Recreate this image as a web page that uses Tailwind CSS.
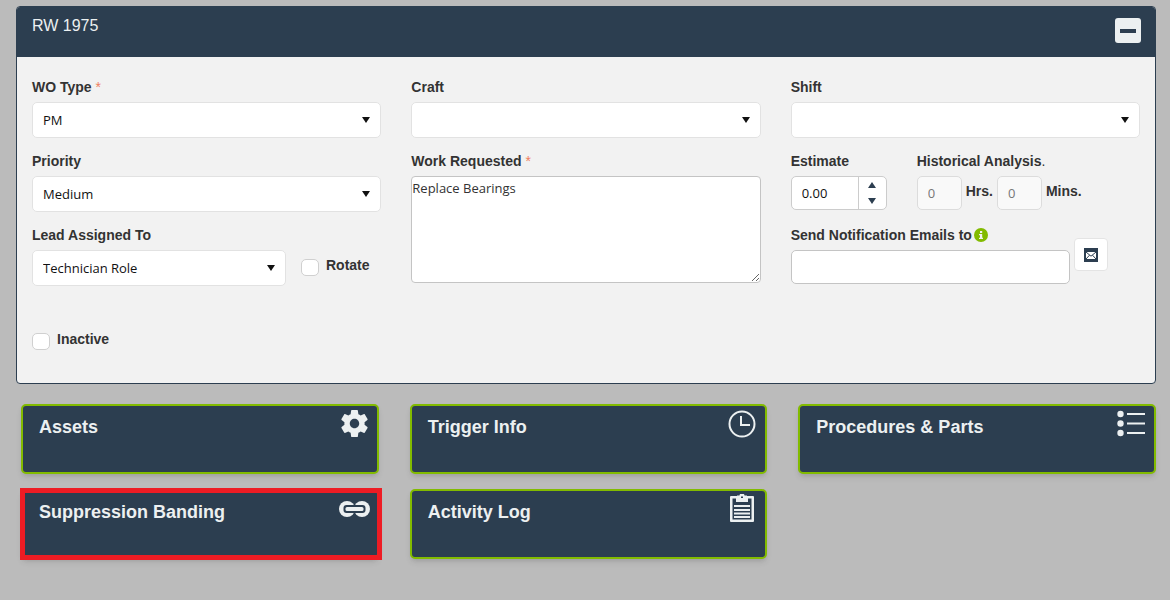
<!DOCTYPE html>
<html lang="en">
<head>
    <meta charset="UTF-8">
    <meta name="viewport" content="width=device-width, initial-scale=1.0">
    <title>RW 1975</title>
    <script src="https://cdn.jsdelivr.net/npm/@tailwindcss/browser@4"></script>
</head>
<body class="min-h-screen bg-[#bbbbbb] font-['Liberation_Sans',Arial,sans-serif] text-sm text-[#333]">
    <main class="pt-1.5 pr-3.5 pb-10 pl-4">
        <!-- Work order panel -->
        <section class="overflow-hidden rounded-[4px] border border-[#2c3e50] bg-[#f2f2f2]">
            <header class="flex h-[50px] items-start justify-between bg-[#2c3e50] pt-2 pr-3.5 pl-[15px]">
                <h1 class="text-base leading-[22px] text-[#ecf0f1]">RW 1975</h1>
                <button type="button" aria-label="Collapse" class="mt-[3px] flex h-[25px] w-[26px] items-center justify-center rounded-[3px] bg-[#ecf0f1]">
                    <svg width="16" height="4" viewBox="0 0 16 4" fill="#2c3e50"><rect width="16" height="4" /></svg>
                </button>
            </header>

            <form class="grid grid-cols-3 gap-x-[30px] px-[15px] pt-5 pb-[33px]">
                <!-- Left column -->
                <div class="flex flex-col gap-[13px]">
                    <div class="flex flex-col gap-[5px]">
                        <label for="woType" class="leading-5 font-bold">WO Type <span class="font-normal text-[#f08060]">*</span></label>
                        <div class="relative">
                            <select id="woType" class="h-9 w-full appearance-none rounded-[5px] border border-[#e2e2e2] bg-white px-2.5 font-['Open_Sans',sans-serif] text-[13px] text-[#111]">
                                <option>PM</option>
                            </select>
                            <svg class="pointer-events-none absolute top-[15px] right-[11px]" width="8" height="6" viewBox="0 0 8 6" fill="#111"><path d="M0 0h8L4 6z" /></svg>
                        </div>
                    </div>
                    <div class="flex flex-col gap-[5px]">
                        <label for="priority" class="leading-5 font-bold">Priority</label>
                        <div class="relative">
                            <select id="priority" class="h-9 w-full appearance-none rounded-[5px] border border-[#e2e2e2] bg-white px-2.5 font-['Open_Sans',sans-serif] text-[13px] text-[#111]">
                                <option>Medium</option>
                            </select>
                            <svg class="pointer-events-none absolute top-[15px] right-[11px]" width="8" height="6" viewBox="0 0 8 6" fill="#111"><path d="M0 0h8L4 6z" /></svg>
                        </div>
                    </div>
                    <div class="flex gap-[15px]">
                        <div class="flex w-[254px] flex-col gap-[5px]">
                            <label for="lead" class="leading-5 font-bold">Lead Assigned To</label>
                            <div class="relative">
                                <select id="lead" class="h-9 w-full appearance-none rounded-[5px] border border-[#e2e2e2] bg-white px-2.5 font-['Open_Sans',sans-serif] text-[13px] text-[#111]">
                                    <option>Technician Role</option>
                                </select>
                                <svg class="pointer-events-none absolute top-[15px] right-[11px]" width="8" height="6" viewBox="0 0 8 6" fill="#111"><path d="M0 0h8L4 6z" /></svg>
                            </div>
                        </div>
                        <div class="flex items-start gap-[7px] pt-[30px]">
                            <input type="checkbox" id="rotate" class="mt-1 h-[17px] w-[18px] appearance-none rounded-[5px] border border-[#d0d0d0] bg-white">
                            <label for="rotate" class="leading-5 font-bold">Rotate</label>
                        </div>
                    </div>
                    <div class="flex items-start gap-[7px] pt-[30px]">
                        <input type="checkbox" id="inactive" class="mt-1 h-[17px] w-[18px] appearance-none rounded-[5px] border border-[#d0d0d0] bg-white">
                        <label for="inactive" class="leading-5 font-bold">Inactive</label>
                    </div>
                </div>

                <!-- Middle column -->
                <div class="flex flex-col gap-[13px]">
                    <div class="flex flex-col gap-[5px]">
                        <label for="craft" class="leading-5 font-bold">Craft</label>
                        <div class="relative">
                            <select id="craft" class="h-9 w-full appearance-none rounded-[5px] border border-[#e2e2e2] bg-white px-2.5 font-['Open_Sans',sans-serif] text-[13px] text-[#111]">
                                <option></option>
                            </select>
                            <svg class="pointer-events-none absolute top-[15px] right-[11px]" width="8" height="6" viewBox="0 0 8 6" fill="#111"><path d="M0 0h8L4 6z" /></svg>
                        </div>
                    </div>
                    <div class="flex flex-col gap-[5px]">
                        <label for="workRequested" class="leading-5 font-bold">Work Requested <span class="font-normal text-[#f08060]">*</span></label>
                        <textarea id="workRequested" class="h-[107px] w-full resize rounded-[4px] border border-[#c4c4c4] bg-white py-0.5 font-['Open_Sans',sans-serif] text-[13px] leading-[18px] text-[#333]">Replace Bearings</textarea>
                    </div>
                </div>

                <!-- Right column -->
                <div class="flex flex-col gap-[13px]">
                    <div class="flex flex-col gap-[5px]">
                        <label for="shift" class="leading-5 font-bold">Shift</label>
                        <div class="relative">
                            <select id="shift" class="h-9 w-full appearance-none rounded-[5px] border border-[#e2e2e2] bg-white px-2.5 font-['Open_Sans',sans-serif] text-[13px] text-[#111]">
                                <option></option>
                            </select>
                            <svg class="pointer-events-none absolute top-[15px] right-[11px]" width="8" height="6" viewBox="0 0 8 6" fill="#111"><path d="M0 0h8L4 6z" /></svg>
                        </div>
                    </div>
                    <div class="flex h-[61px] gap-[30px]">
                        <div class="flex w-24 flex-col gap-[5px]">
                            <label for="estimate" class="leading-5 font-bold">Estimate</label>
                            <div class="flex h-[34px] overflow-hidden rounded-[5px] border border-[#ccc] bg-white">
                                <input type="text" inputmode="decimal" id="estimate" value="0.00" class="w-0 flex-1 pl-2.5 font-['Open_Sans',sans-serif] text-[13px] text-[#111]">
                                <div class="flex w-7 flex-col border-l border-[#ccc]">
                                    <button type="button" aria-label="Increase" class="flex flex-1 items-center justify-center">
                                        <svg width="8" height="6" viewBox="0 0 8 6" fill="#2c3e50"><path d="M0 6h8L4 0z" /></svg>
                                    </button>
                                    <button type="button" aria-label="Decrease" class="flex flex-1 items-center justify-center">
                                        <svg width="8" height="6" viewBox="0 0 8 6" fill="#2c3e50"><path d="M0 0h8L4 6z" /></svg>
                                    </button>
                                </div>
                            </div>
                        </div>
                        <div class="flex flex-col gap-[5px]">
                            <div class="leading-5"><b>Historical Analysis</b>.</div>
                            <div class="flex gap-1">
                                <input type="text" id="histHours" value="0" disabled class="h-[34px] w-[45px] rounded-[5px] border border-[#dcdcdc] bg-[#f9f9f9] px-2.5 font-['Open_Sans',sans-serif] text-[13px] text-[#777]">
                                <label for="histHours" class="mt-[5px] leading-5 font-bold">Hrs.</label>
                                <input type="text" id="histMins" value="0" disabled class="h-[34px] w-[45px] rounded-[5px] border border-[#dcdcdc] bg-[#f9f9f9] px-2.5 font-['Open_Sans',sans-serif] text-[13px] text-[#777]">
                                <label for="histMins" class="mt-[5px] leading-5 font-bold">Mins.</label>
                            </div>
                        </div>
                    </div>
                    <div class="flex items-start gap-1">
                        <div class="flex w-[279px] flex-col gap-[5px]">
                            <div class="flex items-center gap-0.5">
                                <label for="emails" class="leading-5 font-bold">Send Notification Emails to</label>
                                <svg width="14" height="14" viewBox="0 0 14 14"><circle cx="7" cy="7" r="7" fill="#82bb00" /><path fill="#f2f2f2" d="M6 3h2.200v2H6zM5 6h3.200v3.800H9V11H5V9.800h1V7.200H5z" /></svg>
                            </div>
                            <input type="text" id="emails" class="h-[34px] w-full rounded-[5px] border border-[#c4c4c4] bg-white px-2.5 font-['Open_Sans',sans-serif] text-[13px]">
                        </div>
                        <button type="button" aria-label="Send email" class="mt-[13px] flex h-[33px] w-[34px] items-center justify-center rounded-[4px] border border-[#e4e4e4] bg-white">
                            <svg width="14" height="14" viewBox="0 0 14 14"><rect width="14" height="14" fill="#2c3e50" /><rect x="2" y="4" width="10" height="7" fill="#fff" /><path d="M2 4l5 4.200L12 4M2 11l3.500-3.800M12 11L8.500 7.200" fill="none" stroke="#2c3e50" /></svg>
                        </button>
                    </div>
                </div>
            </form>
        </section>

        <!-- Section tiles -->
        <nav class="mt-5 grid grid-cols-3 gap-x-[31px] gap-y-[15px] pl-[5px]">
            <button type="button" class="flex h-[70px] items-start justify-between rounded-[5px] border-2 border-[#82bb00] bg-[#2c3e50] pt-1 pr-[9px] pl-4 text-left text-lg font-bold text-[#ecf0f1] shadow-md">
                <span class="mt-[3px] leading-7">Assets</span>
                <svg width="27" height="27" viewBox="2.300 2 19.400 20" fill="currentColor"><path d="M19.430 12.980c.04-.32.070-.64.070-.98s-.03-.66-.07-.98l2.110-1.650c.19-.15.240-.42.120-.64l-2-3.460c-.12-.22-.39-.3-.61-.22l-2.490 1c-.52-.4-1.080-.73-1.690-.98l-.38-2.650C14.460 2.180 14.250 2 14 2h-4c-.25 0-.46.180-.49.420l-.38 2.650c-.61.250-1.170.590-1.690.980l-2.490-1c-.23-.09-.49 0-.61.220l-2 3.460c-.13.220-.07.490.12.640l2.110 1.650c-.04.320-.07.650-.07.980s.03.660.070.980l-2.110 1.650c-.19.150-.24.420-.12.640l2 3.460c.12.220.390.300.610.220l2.490-1c.52.400 1.080.730 1.690.980l.38 2.650c.03.240.240.420.490.420h4c.25 0 .46-.18.490-.42l.38-2.650c.61-.25 1.170-.59 1.690-.98l2.490 1c.23.090.490 0 .61-.22l2-3.460c.12-.22.070-.49-.12-.64l-2.110-1.650zM12 15.500c-1.930 0-3.500-1.570-3.500-3.500s1.570-3.500 3.500-3.500 3.500 1.570 3.500 3.500-1.570 3.500-3.500 3.500z" /></svg>
            </button>
            <button type="button" class="flex h-[70px] items-start justify-between rounded-[5px] border-2 border-[#82bb00] bg-[#2c3e50] pt-1 pr-[9px] pl-4 text-left text-lg font-bold text-[#ecf0f1] shadow-md">
                <span class="mt-[3px] leading-7">Trigger Info</span>
                <svg width="28" height="28" viewBox="0 0 28 28" fill="none" stroke="currentColor" stroke-width="2"><circle cx="14" cy="14" r="12.500" /><path d="M13 6v9h9" /></svg>
            </button>
            <button type="button" class="flex h-[70px] items-start justify-between rounded-[5px] border-2 border-[#82bb00] bg-[#2c3e50] pt-1 pr-[9px] pl-4 text-left text-lg font-bold text-[#ecf0f1] shadow-md">
                <span class="mt-[3px] leading-7">Procedures &amp; Parts</span>
                <svg width="28" height="27" viewBox="0 0 28 27" fill="currentColor"><circle cx="3.500" cy="4" r="3.200" /><circle cx="3.500" cy="13.500" r="3.200" /><circle cx="3.500" cy="23" r="3.200" /><path d="M10 3h18v2H10zM10 12.500h18v2H10zM10 22h18v2H10z" /></svg>
            </button>
            <button type="button" class="relative flex h-[70px] items-start justify-between rounded-[5px] border-2 border-[#82bb00] bg-[#2c3e50] pt-1 pr-[7px] pl-4 text-left text-lg font-bold text-[#ecf0f1] shadow-md">
                <span class="mt-[3px] leading-7">Suppression Banding</span>
                <svg class="mt-1.5" width="31" height="16" viewBox="0 0 31 16" fill="currentColor"><circle cx="8" cy="8" r="8" /><circle cx="23" cy="8" r="8" /><rect x="4.500" y="4" width="22" height="8" rx="3" fill="#2c3e50" /><rect x="6.500" y="6" width="18" height="4" rx="1.500" /></svg>
                <span class="absolute -top-[3px] -right-[5px] -bottom-[3px] -left-[3px] border-5 border-[#ed1c24]"></span>
            </button>
            <button type="button" class="flex h-[70px] items-start justify-between rounded-[5px] border-2 border-[#82bb00] bg-[#2c3e50] pt-[3px] pr-[11px] pl-4 text-left text-lg font-bold text-[#ecf0f1] shadow-md">
                <span class="mt-1 leading-7">Activity Log</span>
                <svg width="24" height="28" viewBox="0 0 24 28" fill="currentColor"><path fill-rule="evenodd" d="M1 2h6V1.500h2.500a2.500 2 0 0 1 5 0H17V2h6a1 1 0 0 1 1 1v24a1 1 0 0 1-1 1H1a1 1 0 0 1-1-1V3a1 1 0 0 1 1-1zM2.500 4.500v21h19v-21H18V8H6V4.500zM11 2.500v1.500h2V2.500z" /><path d="M4 11h16v2H4zM4 15h16v2H4zM4 18.500h16v2H4zM4 22h16v2H4z" /></svg>
            </button>
        </nav>
    </main>
</body>
</html>
